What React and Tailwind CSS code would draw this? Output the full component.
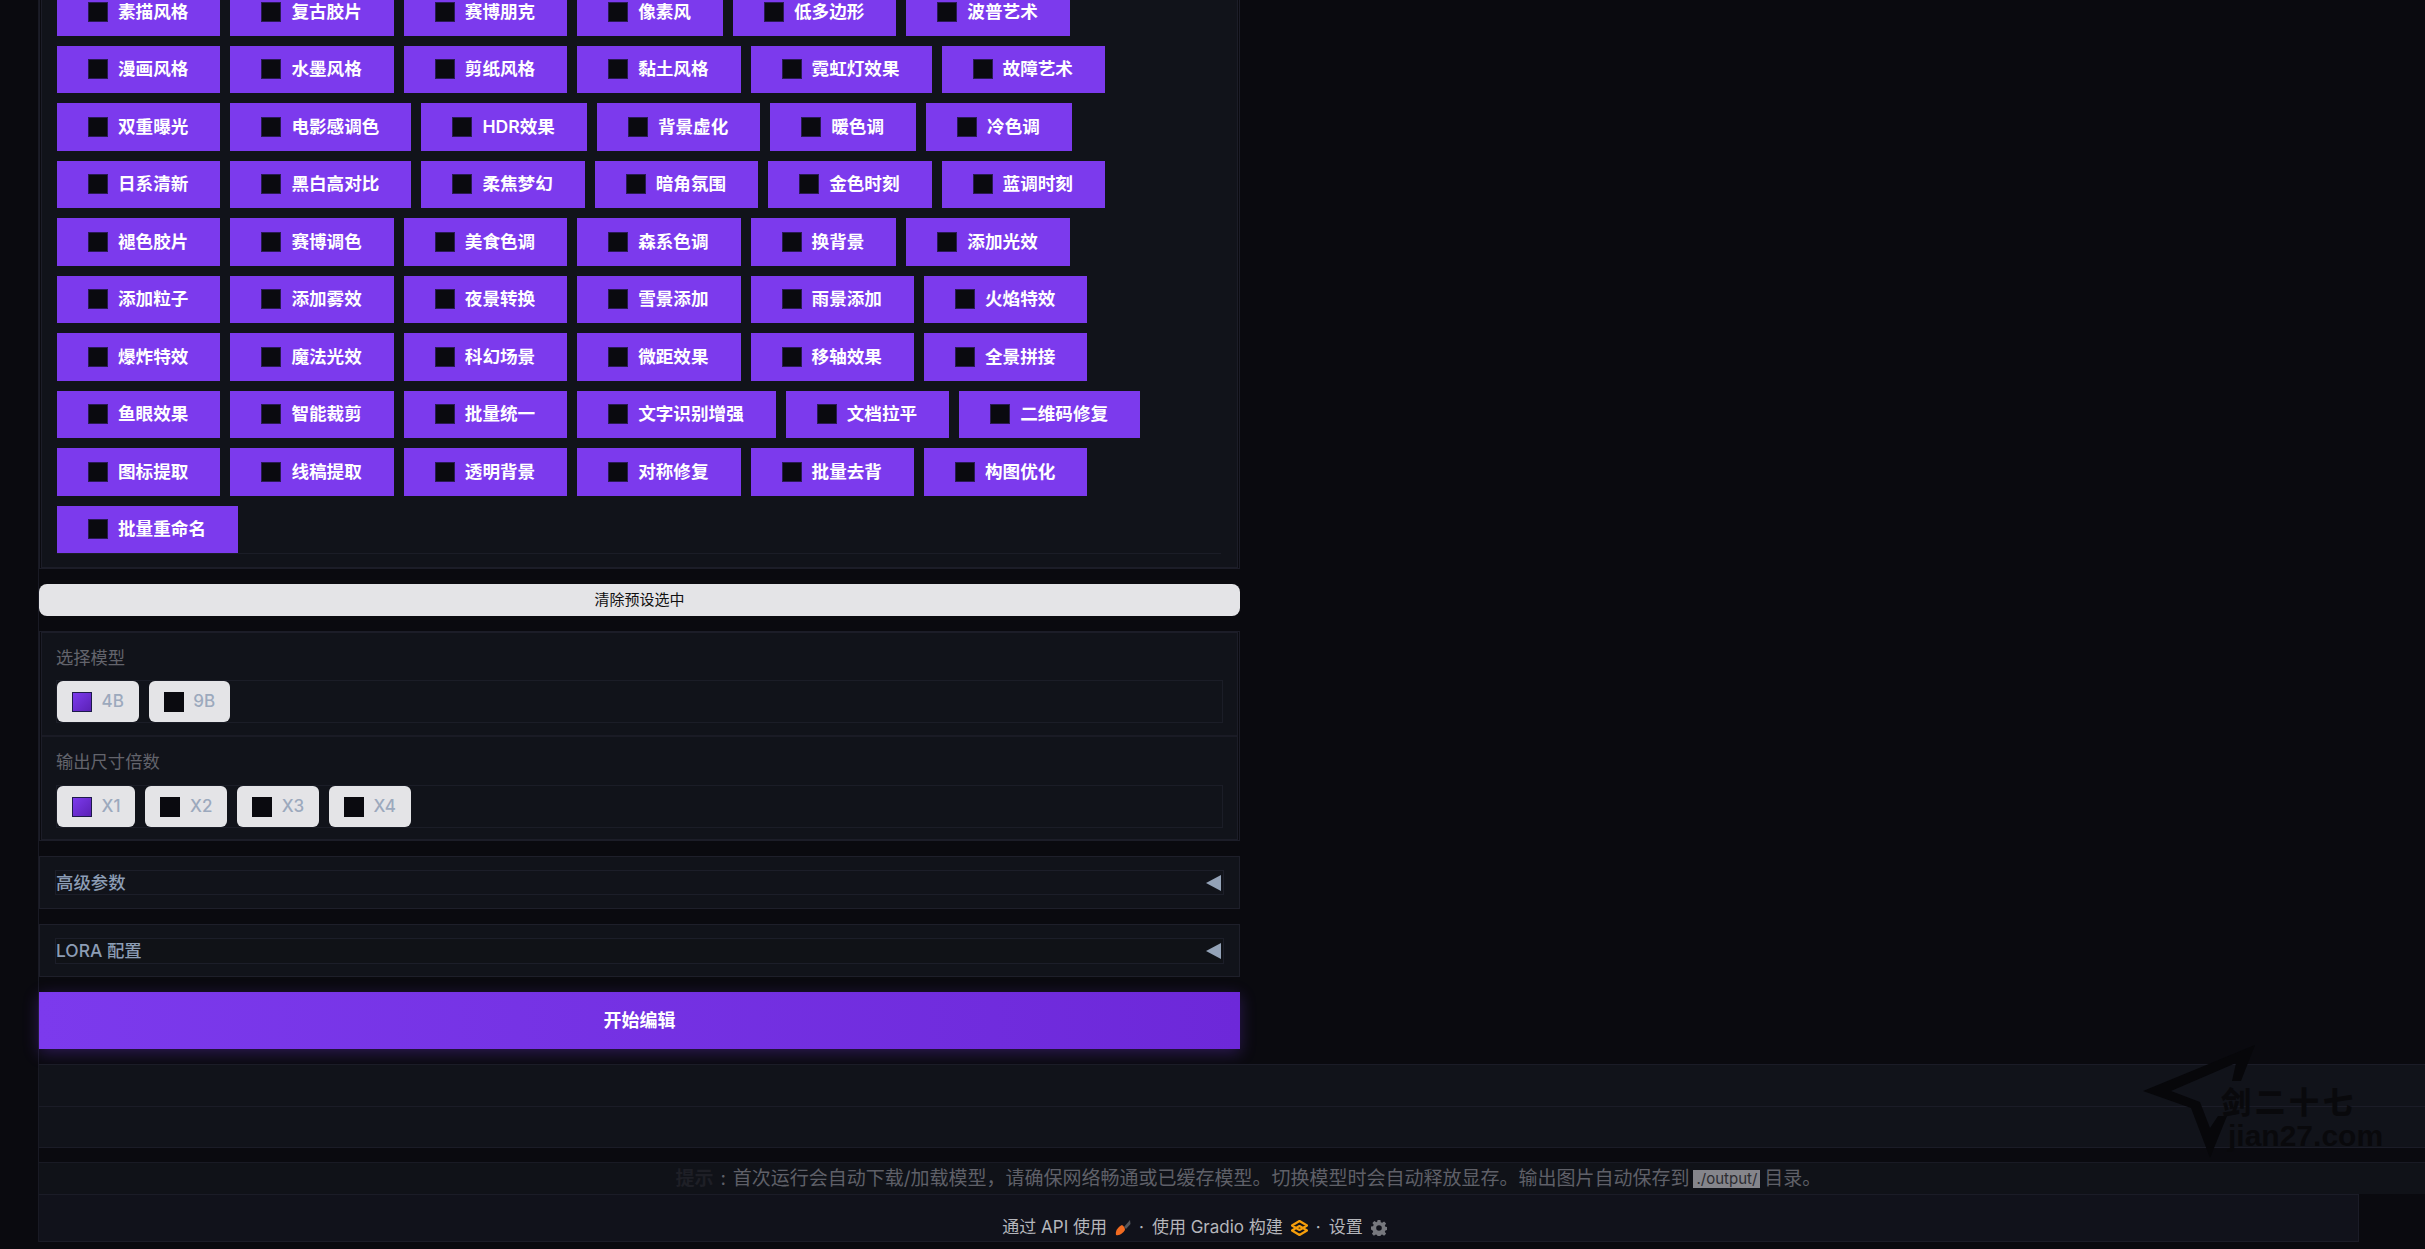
const FONT = { fontFamily: '"Inter", "Noto Sans CJK SC", sans-serif' };

const presets = [
  '素描风格', '复古胶片', '赛博朋克', '像素风', '低多边形', '波普艺术',
  '漫画风格', '水墨风格', '剪纸风格', '黏土风格', '霓虹灯效果', '故障艺术',
  '双重曝光', '电影感调色', 'HDR效果', '背景虚化', '暖色调', '冷色调',
  '日系清新', '黑白高对比', '柔焦梦幻', '暗角氛围', '金色时刻', '蓝调时刻',
  '褪色胶片', '赛博调色', '美食色调', '森系色调', '换背景', '添加光效',
  '添加粒子', '添加雾效', '夜景转换', '雪景添加', '雨景添加', '火焰特效',
  '爆炸特效', '魔法光效', '科幻场景', '微距效果', '移轴效果', '全景拼接',
  '鱼眼效果', '智能裁剪', '批量统一', '文字识别增强', '文档拉平', '二维码修复',
  '图标提取', '线稿提取', '透明背景', '对称修复', '批量去背', '构图优化',
  '批量重命名',
];

const PresetChip = ({ label }) => (
  <label className="flex h-[47.5px] items-center gap-[10px] bg-[#7c3aed] pl-[31px] pr-[32px] text-[17.6px] font-semibold leading-none text-white">
    <span className="h-5 w-5 shrink-0 border border-[#2a1a55] bg-[#0a0a0f]" />
    <span>{label}</span>
  </label>
);

const RadioChip = ({ label, checked }) => (
  <label className="flex h-[41px] items-center gap-[9.5px] rounded-md bg-[#e4e4e7] px-[15px] text-[17px] font-medium text-[#9ca9bd]">
    <span
      className={
        checked
          ? 'h-5 w-5 shrink-0 border border-[#1e1b4b] bg-gradient-to-br from-[#7c3aed] to-[#5b21b6]'
          : 'h-5 w-5 shrink-0 bg-[#0a0a0f]'
      }
    />
    <span>{label}</span>
  </label>
);

const RadioBlock = ({ title, options, className = '', rowClass = '' }) => (
  <div className={`px-[14px] ${className}`}>
    <div className="flex h-6 items-center text-[17.3px] leading-none text-[#63646c]">{title}</div>
    <div className={`flex h-[43px] gap-[10px] border border-[#1b1d27] ${rowClass}`}>
      {options.map((o, i) => (
        <RadioChip key={o} label={o} checked={i === 0} />
      ))}
    </div>
  </div>
);

const Accordion = ({ title, innerClass }) => (
  <div className="flex h-[53px] items-center border border-[#1e1f2a] bg-[#11131a] px-[15px]">
    <div className={`flex w-full items-center justify-between border border-[#1c1e29] ${innerClass}`}>
      <span className="text-[17.4px] font-medium leading-none text-[#8c9db5]">{title}</span>
      <svg width="15" height="16" viewBox="0 0 15 16" className="mr-[2px]">
        <polygon points="0,8 15,0 15,16" fill="#94a3b8" />
      </svg>
    </div>
  </div>
);

const RocketIcon = () => (
  <svg width="16" height="18" viewBox="0 0 16 18">
    <path d="M9 8 L15 1 L15.5 5 L11 10 Z" fill="#55565c" />
    <path d="M1 16 C0 12 3 8 7 6 C9 7 10 9 10 11 C8 14 5 17 1 16 Z" fill="#f26b21" />
  </svg>
);

const GradioIcon = () => (
  <svg width="17" height="16" viewBox="0 0 17 16" fill="none" stroke="#f59e0b" strokeWidth="2.2" strokeLinejoin="round">
    <path d="M8.5 1 L16 5.5 L12 8 L8.5 6 L5 8 L8.5 10 L12 8 L16 10.5 L8.5 15 L1 10.5 L5 8 L1 5.5 Z" />
  </svg>
);

const GearIcon = () => (
  <svg width="16" height="16" viewBox="0 0 16 16">
    <path
      fillRule="evenodd"
      fill="#77787e"
      d="M6.6 0h2.8l.4 2.2 1.4.6 1.9-1.3 2 2-1.3 1.9.6 1.4 2.1.4v2.8l-2.1.4-.6 1.4 1.3 1.9-2 2-1.9-1.3-1.4.6-.4 2.1H6.6l-.4-2.1-1.4-.6-1.9 1.3-2-2 1.3-1.9-.6-1.4L0 9.4V6.6l2.1-.4.6-1.4L1.4 2.9l2-2 1.9 1.3 1-.6zM8 5.2a2.8 2.8 0 1 0 0 5.6 2.8 2.8 0 0 0 0-5.6z"
    />
  </svg>
);

const Watermark = () => (
  <div className="pointer-events-none absolute left-[2143px] top-[1045px] h-[115px] w-[250px]">
    <svg width="114" height="114" viewBox="0 0 114 114" className="absolute left-0 top-0">
      <polygon
        fill="#07070a"
        points="112,0 0,46 48,63 67,113 84,71 75,71 67,83 57,57 28,46 93,18 89,36 98,36"
      />
    </svg>
    <div
      className="absolute left-[78px] top-[40px] whitespace-nowrap text-[30px] font-black leading-none tracking-[4px] text-[#09090c]"
      style={{ fontFamily: '"Noto Sans CJK SC", sans-serif' }}
    >
      剑二十七
    </div>
    <div
      className="absolute left-[85px] top-[76px] whitespace-nowrap text-[30px] font-bold leading-none text-[#09090c]"
      style={{ fontFamily: '"Liberation Sans", sans-serif' }}
    >
      jian27.com
    </div>
  </div>
);

export default function App() {
  return (
    <div className="relative h-[1249px] w-full overflow-hidden bg-[#0a0a0f]" style={FONT}>
      <div className="ml-[38px] mt-[-41px] flex w-[2412px] flex-col border-l border-[#191a24]">
        <div className="flex w-[1201px] flex-col gap-[15px]">
          {/* Presets */}
          <div className="border border-[#1c1d28] pl-px pr-px">
            <div className="border border-[#1c1d28] bg-[#11131a] pb-[13px] pl-[15px] pr-[16px]">
              <div className="flex flex-wrap gap-x-[10px] gap-y-[10px] border-b border-[#1b1d27] pt-[27px]">
                {presets.map((p) => (
                  <PresetChip key={p} label={p} />
                ))}
              </div>
            </div>
          </div>

          <button className="h-8 rounded-lg bg-[#e4e4e7] text-[15px] font-normal text-[#111]">清除预设选中</button>

          {/* Model + scale */}
          <div className="border border-[#1c1d28] pl-px pr-px">
            <div className="border border-[#1c1d28] bg-[#11131a]">
              <RadioBlock title="选择模型" options={['4B', '9B']} className="pb-[12px] pt-[13px]" rowClass="mt-[10px]" />
              <div className="h-0.5 bg-[#1a1b25]" />
              <RadioBlock title="输出尺寸倍数" options={['X1', 'X2', 'X3', 'X4']} className="pb-[11px] pt-[13px]" rowClass="mt-[11px]" />
            </div>
          </div>

          <Accordion title="高级参数" innerClass="h-[25px]" />
          <Accordion title="LORA 配置" innerClass="h-[26px] bg-[#101217]" />

          <button className="h-[57px] bg-gradient-to-r from-[#7c3aed] to-[#6d28d9] text-[18px] font-semibold text-white shadow-[0_4px_15px_rgba(124,58,237,0.3)]">
            开始编辑
          </button>
        </div>

        {/* Output rows */}
        <div className="mt-[15px] bg-[#11131a]">
          <div className="h-[41.5px] border-t border-[#1b1c27]" />
          <div className="h-[41px] border-t border-[#1b1c27]" />
        </div>
        <div className="h-[15.5px] border-t border-[#1b1c27]" />

        <div className="flex h-8 items-center justify-center border-t border-[#191a24] bg-[#101218] pl-[8px] text-[19px] leading-none text-[#5f6068]">
          <strong className="font-bold text-[#1e1f26]">提示</strong>
          <span className="w-[19px] text-center">:</span>
          <span>首次运行会自动下载/加载模型，请确保网络畅通或已缓存模型。切换模型时会自动释放显存。输出图片自动保存到</span>
          <code
            className="mx-[4px] flex h-[18px] items-center bg-[#85858b] px-[3px] text-[15px] text-[#2b2b30]"
            style={FONT}
          >
            ./output/
          </code>
          <span>目录。</span>
        </div>

        <div className="flex h-[47.5px] w-[2320px] items-center justify-center gap-[8px] border-y border-r border-[#1b1c27] bg-[#11121b] pr-[8px] pt-[20px] text-[17px] leading-none text-[#b5b6bb]">
          <span>通过 API 使用</span>
          <RocketIcon />
          <span>·</span>
          <span>使用 Gradio 构建</span>
          <GradioIcon />
          <span>·</span>
          <span>设置</span>
          <GearIcon />
        </div>
      </div>
      <Watermark />
    </div>
  );
}
